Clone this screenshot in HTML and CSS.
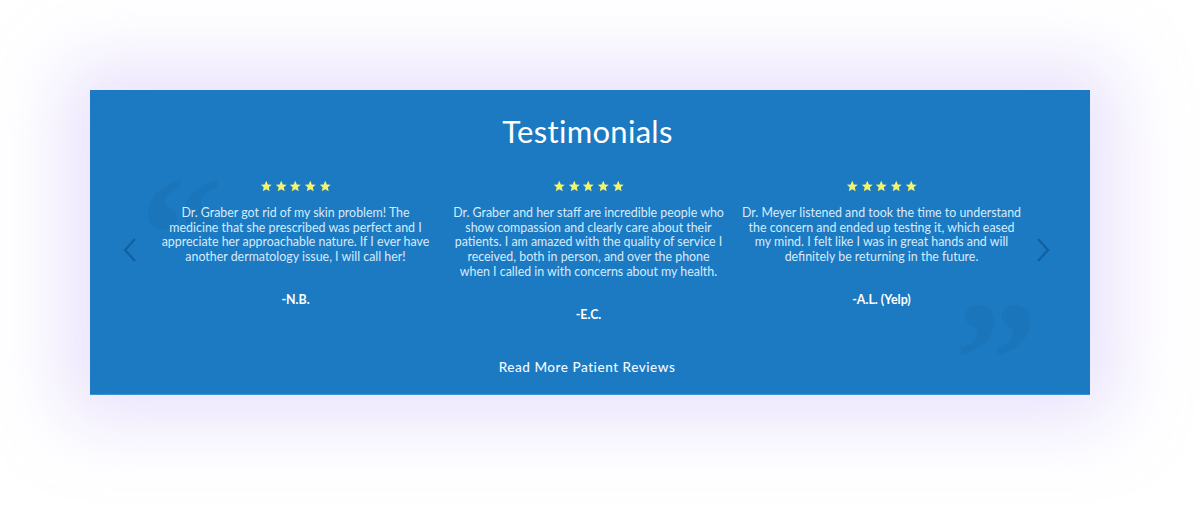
FILE: index.html
```html
<!DOCTYPE html>
<html>
<head>
<meta charset="utf-8">
<link rel="stylesheet" href="styles.css">
</head>
<body>
<section class="panel">
  <h2 class="title">Testimonials</h2>
  <div class="slider">
    <div class="arrow">
      <svg viewBox="0 0 16 26" width="16" height="26"><path d="M13 2 L3 13 L13 24" fill="none" stroke="#145f9e" stroke-width="2.2"/></svg>
    </div>
    <div class="cards">
      <div class="card">
        <div class="stars">
          <svg viewBox="0 0 24 24"><path d="M12 1.5l3.1 6.9 7.4.7-5.6 5 1.7 7.3L12 17.6l-6.6 3.8 1.7-7.3-5.6-5 7.4-.7z"/></svg>
          <svg viewBox="0 0 24 24"><path d="M12 1.5l3.1 6.9 7.4.7-5.6 5 1.7 7.3L12 17.6l-6.6 3.8 1.7-7.3-5.6-5 7.4-.7z"/></svg>
          <svg viewBox="0 0 24 24"><path d="M12 1.5l3.1 6.9 7.4.7-5.6 5 1.7 7.3L12 17.6l-6.6 3.8 1.7-7.3-5.6-5 7.4-.7z"/></svg>
          <svg viewBox="0 0 24 24"><path d="M12 1.5l3.1 6.9 7.4.7-5.6 5 1.7 7.3L12 17.6l-6.6 3.8 1.7-7.3-5.6-5 7.4-.7z"/></svg>
          <svg viewBox="0 0 24 24"><path d="M12 1.5l3.1 6.9 7.4.7-5.6 5 1.7 7.3L12 17.6l-6.6 3.8 1.7-7.3-5.6-5 7.4-.7z"/></svg>
        </div>
        <p class="text">Dr. Graber got rid of my skin problem! The<br>medicine that she prescribed was perfect and I<br>appreciate her approachable nature. If I ever have<br>another dermatology issue, I will call her!</p>
        <p class="author">-N.B.</p>
      </div>
      <div class="card">
        <div class="stars">
          <svg viewBox="0 0 24 24"><path d="M12 1.5l3.1 6.9 7.4.7-5.6 5 1.7 7.3L12 17.6l-6.6 3.8 1.7-7.3-5.6-5 7.4-.7z"/></svg>
          <svg viewBox="0 0 24 24"><path d="M12 1.5l3.1 6.9 7.4.7-5.6 5 1.7 7.3L12 17.6l-6.6 3.8 1.7-7.3-5.6-5 7.4-.7z"/></svg>
          <svg viewBox="0 0 24 24"><path d="M12 1.5l3.1 6.9 7.4.7-5.6 5 1.7 7.3L12 17.6l-6.6 3.8 1.7-7.3-5.6-5 7.4-.7z"/></svg>
          <svg viewBox="0 0 24 24"><path d="M12 1.5l3.1 6.9 7.4.7-5.6 5 1.7 7.3L12 17.6l-6.6 3.8 1.7-7.3-5.6-5 7.4-.7z"/></svg>
          <svg viewBox="0 0 24 24"><path d="M12 1.5l3.1 6.9 7.4.7-5.6 5 1.7 7.3L12 17.6l-6.6 3.8 1.7-7.3-5.6-5 7.4-.7z"/></svg>
        </div>
        <p class="text">Dr. Graber and her staff are incredible people who<br>show compassion and clearly care about their<br>patients. I am amazed with the quality of service I<br>received, both in person, and over the phone<br>when I called in with concerns about my health.</p>
        <p class="author">-E.C.</p>
      </div>
      <div class="card">
        <div class="stars">
          <svg viewBox="0 0 24 24"><path d="M12 1.5l3.1 6.9 7.4.7-5.6 5 1.7 7.3L12 17.6l-6.6 3.8 1.7-7.3-5.6-5 7.4-.7z"/></svg>
          <svg viewBox="0 0 24 24"><path d="M12 1.5l3.1 6.9 7.4.7-5.6 5 1.7 7.3L12 17.6l-6.6 3.8 1.7-7.3-5.6-5 7.4-.7z"/></svg>
          <svg viewBox="0 0 24 24"><path d="M12 1.5l3.1 6.9 7.4.7-5.6 5 1.7 7.3L12 17.6l-6.6 3.8 1.7-7.3-5.6-5 7.4-.7z"/></svg>
          <svg viewBox="0 0 24 24"><path d="M12 1.5l3.1 6.9 7.4.7-5.6 5 1.7 7.3L12 17.6l-6.6 3.8 1.7-7.3-5.6-5 7.4-.7z"/></svg>
          <svg viewBox="0 0 24 24"><path d="M12 1.5l3.1 6.9 7.4.7-5.6 5 1.7 7.3L12 17.6l-6.6 3.8 1.7-7.3-5.6-5 7.4-.7z"/></svg>
        </div>
        <p class="text">Dr. Meyer listened and took the time to understand<br>the concern and ended up testing it, which eased<br>my mind. I felt like I was in great hands and will<br>definitely be returning in the future.</p>
        <p class="author">-A.L. (Yelp)</p>
      </div>
    </div>
    <div class="arrow">
      <svg viewBox="0 0 16 26" width="16" height="26"><path d="M3 2 L13 13 L3 24" fill="none" stroke="#145f9e" stroke-width="2.2"/></svg>
    </div>
  </div>
  <a class="more">Read More Patient Reviews</a>
</section>
</body>
</html>
```
FILE: styles.css
```css
html, body {
  margin: 0;
  padding: 0;
  background: #ffffff;
}
body {
  font-family: "Lato", "Noto Sans", sans-serif;
  height: 506px;
  overflow: hidden;
}
.panel {
  position: relative;
  width: 1000px;
  height: 305px;
  margin: 90px 0 0 90px;
  box-sizing: border-box;
  background: #1c7ac2;
  border-bottom: 1px solid #3d90d2;
  box-shadow: 0 0 70px 25px rgba(190, 170, 245, 0.35);
  padding-top: 21px;
  overflow: hidden;
}
.panel::before,
.panel::after {
  position: absolute;
  font-family: "Liberation Serif", serif;
  font-weight: bold;
  font-size: 165px;
  line-height: 1;
  height: 120px;
  overflow: hidden;
  color: rgba(10, 60, 110, 0.08);
}
.panel::before {
  content: "\201C";
  left: 50px;
  top: 62px;
}
.panel::after {
  content: "\201D";
  left: 865px;
  top: 187px;
}
.title {
  position: relative;
  margin: 0;
  padding-right: 5px;
  text-align: center;
  font-weight: 400;
  font-size: 31px;
  line-height: 40px;
  color: #ffffff;
  letter-spacing: 0.3px;
}
.slider {
  position: relative;
  display: flex;
  padding: 0 37px 0 30px;
  margin-top: 29px;
}
.arrow {
  width: 20px;
  display: flex;
  justify-content: center;
  margin-top: 57px;
  height: 26px;
}
.cards {
  display: grid;
  grid-template-columns: 281px 281px 281px;
  column-gap: 12px;
  margin: 0 11px 0 15px;
}
.card {
  display: flex;
  flex-direction: column;
  align-items: center;
  text-align: center;
}
.stars {
  display: flex;
  gap: 2.2px;
  height: 13px;
}
.stars svg {
  width: 12.5px;
  height: 12.5px;
  fill: #f2f46b;
}
.text {
  margin: 13px 0 0;
  font-size: 12.4px;
  line-height: 14.7px;
  color: #d6ebfc;
  white-space: nowrap;
}
.author {
  margin: 27px 0 0;
  font-size: 12.4px;
  font-weight: 700;
  line-height: 15px;
  color: #ffffff;
}
.more {
  position: absolute;
  left: 0;
  right: 6px;
  top: 269px;
  text-align: center;
  font-size: 13.5px;
  font-weight: 500;
  letter-spacing: 0.55px;
  color: #f3f9ff;
}
```
